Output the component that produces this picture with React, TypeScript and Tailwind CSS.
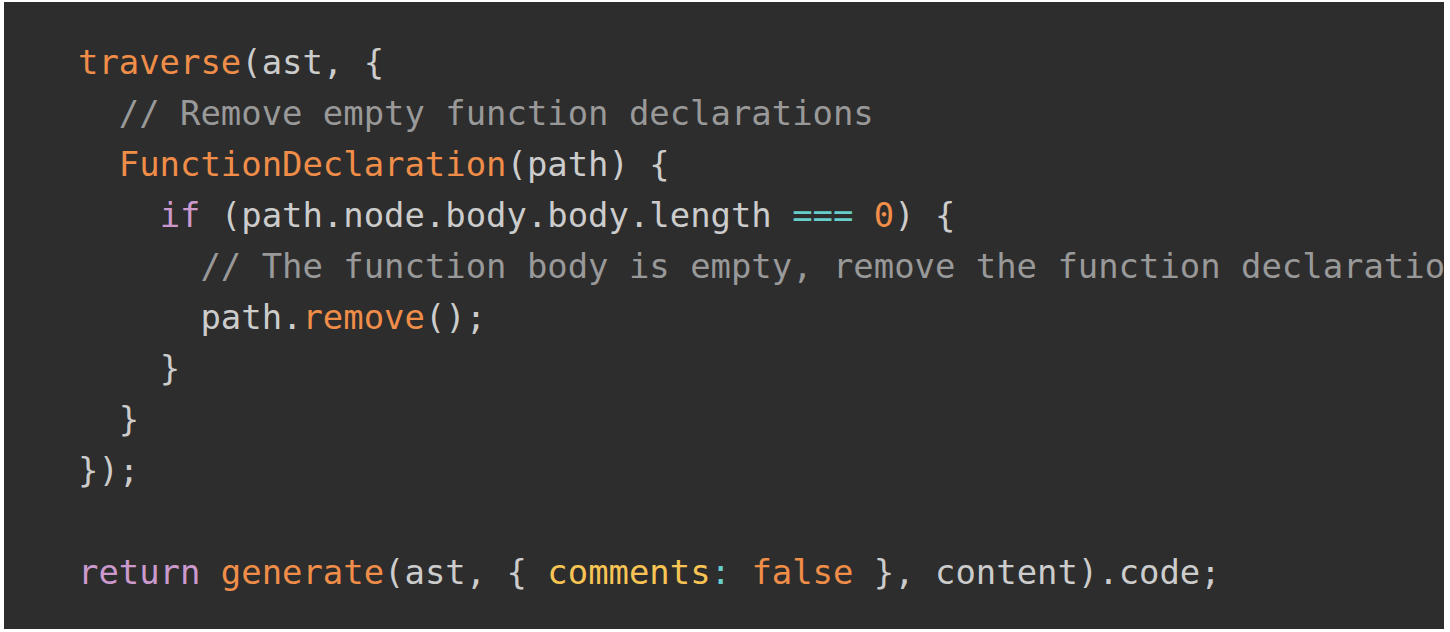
import React from "react";

const O = "text-[#f08d49]";
const C = "text-[#999999]";
const K = "text-[#cc99cd]";
const T = "text-[#67cdcc]";
const Y = "text-[#f8c555]";

export default function App() {
  return (
    <div className="w-[1450px] h-[632px] bg-white pl-[4px] pt-[2px] pr-[6px] pb-[3px] overflow-hidden">
      <div className="w-full h-full bg-[#2d2d2d] overflow-hidden pl-[74px] pt-[35px]">
        <pre
          className="text-[#cccccc] text-[33.9px] leading-[51px] whitespace-pre m-0"
          style={{ fontFamily: '"DejaVu Sans Mono", "Liberation Mono", monospace' }}
        >
          <div><span className={O}>traverse</span>(ast, {"{"}</div>
          <div>{"  "}<span className={C}>// Remove empty function declarations</span></div>
          <div>{"  "}<span className={O}>FunctionDeclaration</span>(path) {"{"}</div>
          <div>{"    "}<span className={K}>if</span> (path.node.body.body.length <span className={T}>===</span> <span className={O}>0</span>) {"{"}</div>
          <div>{"      "}<span className={C}>// The function body is empty, remove the function declaration</span></div>
          <div>{"      "}path.<span className={O}>remove</span>();</div>
          <div>{"    "}{"}"}</div>
          <div>{"  "}{"}"}</div>
          <div>{"});"}</div>
          <div>{" "}</div>
          <div><span className={K}>return</span> <span className={O}>generate</span>(ast, {"{"} <span className={Y}>comments</span><span className={T}>:</span> <span className={O}>false</span> {"}"}, content).code;</div>
        </pre>
      </div>
    </div>
  );
}
